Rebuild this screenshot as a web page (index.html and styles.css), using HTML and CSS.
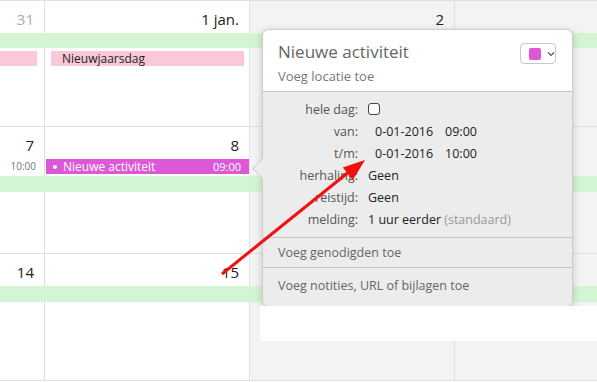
FILE: index.html
```html
<!DOCTYPE html>
<html lang="nl">

<head>
  <meta charset="UTF-8" />
  <title>Agenda</title>
  <link rel="stylesheet" href="styles.css">
</head>

<body>
  <div class="cal">
    <!-- week 1 -->
    <div class="week">
      <div class="day c1 other"><span class="num">31</span></div>
      <div class="day c2"><span class="num">1 jan.</span></div>
      <div class="day c3 weekend"><span class="num">2</span></div>
      <div class="day c4 weekend"></div>
      <div class="band r2"></div>
      <div class="allday c1 r3 cont"></div>
      <div class="allday c2 r3">Nieuwjaarsdag</div>
    </div>
    <!-- week 2 -->
    <div class="week">
      <div class="day c1"><span class="num">7</span></div>
      <div class="day c2"><span class="num">8</span></div>
      <div class="day c3 weekend"></div>
      <div class="day c4 weekend"></div>
      <div class="time c1 r2">10:00</div>
      <div class="event c2 r2">
        <span class="dot"></span>
        <span class="ev-name">Nieuwe activiteit</span>
        <span class="ev-time">09:00</span>
      </div>
      <div class="band r3"></div>
    </div>
    <!-- week 3 -->
    <div class="week">
      <div class="day c1"><span class="num">14</span></div>
      <div class="day c2"><span class="num">15</span></div>
      <div class="day c3 weekend"></div>
      <div class="day c4 weekend"></div>
      <div class="band r2"></div>
    </div>
  </div>

  <!-- popover nieuwe activiteit -->
  <div class="pop">
    <div class="pop-head">
      <div class="pop-titles">
        <div class="pop-title">Nieuwe activiteit</div>
        <div class="pop-sub">Voeg locatie toe</div>
      </div>
      <div class="color-btn">
        <span class="swatch"></span>
        <svg width="8" height="6" viewBox="0 0 8 6"><path d="M1 1.5 L4 4.5 L7 1.5" fill="none" stroke="#555" stroke-width="1.2"/></svg>
      </div>
    </div>
    <div class="pop-form">
      <div class="row"><span class="lbl">hele dag:</span><span class="val"><span class="check"></span></span></div>
      <div class="row"><span class="lbl">van:</span><span class="val date"><span>0-01-2016</span><span>09:00</span></span></div>
      <div class="row"><span class="lbl">t/m:</span><span class="val date"><span>0-01-2016</span><span>10:00</span></span></div>
      <div class="row"><span class="lbl">herhaling:</span><span class="val">Geen</span></div>
      <div class="row"><span class="lbl">reistijd:</span><span class="val">Geen</span></div>
      <div class="row"><span class="lbl">melding:</span><span class="val">1 uur eerder <span class="muted">(standaard)</span></span></div>
    </div>
    <div class="pop-link">Voeg genodigden toe</div>
    <div class="pop-link last">Voeg notities, URL of bijlagen toe</div>
  </div>

  <div class="blank"></div>

  <!-- rode pijl -->
  <svg class="arrow" width="597" height="382" viewBox="0 0 597 382">
    <line x1="222" y1="274" x2="350" y2="171" stroke="#f01010" stroke-width="3" />
    <polygon points="365,160 352.8,180 342.8,167.5" fill="#f01010" />
  </svg>
</body>

</html>
```

FILE: styles.css
```css
* {
  margin: 0;
  padding: 0;
  box-sizing: border-box;
}

body {
  width: 597px;
  height: 382px;
  overflow: hidden;
  background: #fff;
  font-family: "Open Sans", "Liberation Sans", sans-serif;
  color: #222;
}

.cal {
  border-top: 1px solid #e0e0e0;
}

.week {
  display: grid;
  grid-template-columns: 45px 205px 205px 1fr;
  grid-template-rows: 32px 17px 17px 1fr;
  height: 127px;
  border-bottom: 1px solid #e0e0e0;
}

.week:first-child {
  height: 126px;
}

.c1 { grid-column: 1; }
.c2 { grid-column: 2; }
.c3 { grid-column: 3; }
.c4 { grid-column: 4; }
.r2 { grid-row: 2; }
.r3 { grid-row: 3; }

.day {
  grid-row: 1 / -1;
  border-right: 1px solid #e0e0e0;
  text-align: right;
  padding: 7px 10px 0 0;
}

.day.c4 {
  border-right: none;
}

.weekend {
  background: #f3f3f3;
}

.num {
  font-size: 15px;
  line-height: 18px;
  color: #222;
}

.other .num {
  color: #aaa;
}

.band {
  grid-column: 1 / -1;
  height: 16px;
  background: #d3f5d3;
}

.week:first-child .band {
  height: 15px;
}

.allday {
  align-self: start;
  margin-top: 1px;
  height: 15px;
  background: #fbc8da;
  font-size: 12px;
  line-height: 15px;
  padding-left: 11px;
}

.allday.c1 {
  margin-right: 8px;
}

.allday.c2 {
  margin-left: 6px;
  margin-right: 6px;
}

.time {
  align-self: start;
  text-align: right;
  padding-right: 9px;
  font-size: 10px;
  line-height: 15px;
  color: #777;
}

.event {
  align-self: start;
  display: flex;
  align-items: center;
  height: 15px;
  margin: 0 1px;
  padding: 0 8px 0 7px;
  background: #dd58d9;
  color: #fff;
  font-size: 12px;
  font-weight: 500;
}

.dot {
  width: 4px;
  height: 4px;
  border-radius: 50%;
  background: #fff;
  margin-right: 6px;
}

.ev-name {
  flex: 1;
}

.ev-time {
  font-size: 11px;
}

/* popover */
.pop {
  position: absolute;
  left: 262px;
  top: 29px;
  width: 311px;
  background: #ececec;
  border: 1px solid #cdcdcd;
  border-radius: 6px;
  box-shadow: 0 2px 8px rgba(0, 0, 0, 0.18);
  color: #555;
}

.pop::before {
  content: "";
  position: absolute;
  left: -8px;
  top: 131px;
  width: 14px;
  height: 14px;
  background: #ececec;
  border-left: 1px solid #cdcdcd;
  border-bottom: 1px solid #cdcdcd;
  transform: rotate(45deg);
}

.pop-head {
  display: flex;
  justify-content: space-between;
  align-items: flex-start;
  background: #fff;
  border-radius: 6px 6px 0 0;
  padding: 11px 16px 5px 15px;
  border-bottom: 1px solid #c4c4c4;
}

.pop-title {
  font-size: 17px;
  line-height: 22px;
  color: #666;
}

.pop-sub {
  margin-top: 3px;
  font-size: 13px;
  line-height: 20px;
  color: #777;
}

.color-btn {
  display: flex;
  align-items: center;
  gap: 6px;
  margin-top: 2px;
  width: 36px;
  height: 21px;
  padding-left: 8px;
  background: #fff;
  border: 1px solid #c8c8c8;
  border-radius: 4px;
}

.swatch {
  width: 12px;
  height: 12px;
  border-radius: 2px;
  background: #dd58d9;
}

.pop-form {
  padding: 6px 0 7px;
  border-bottom: 1px solid #c4c4c4;
}

.row {
  display: grid;
  grid-template-columns: 95px 1fr;
  column-gap: 10px;
  align-items: center;
  height: 22px;
  font-size: 12.5px;
}

.lbl {
  text-align: right;
  color: #555;
}

.val {
  color: #222;
}

.val.date {
  display: flex;
  gap: 12px;
  padding-left: 7px;
}

.muted {
  color: #999;
}

.check {
  display: block;
  width: 12px;
  height: 12px;
  background: #fff;
  border: 1px solid #444;
  border-radius: 3px;
}

.pop-link {
  height: 30px;
  line-height: 30px;
  padding-left: 15px;
  font-size: 12.5px;
  color: #666;
  border-bottom: 1px solid #c4c4c4;
}

.pop-link.last {
  height: 38px;
  line-height: 35px;
  border-bottom: none;
}

.blank {
  position: absolute;
  left: 260px;
  top: 306px;
  width: 337px;
  height: 35px;
  background: #fff;
}

.arrow {
  position: absolute;
  left: 0;
  top: 0;
}
```
